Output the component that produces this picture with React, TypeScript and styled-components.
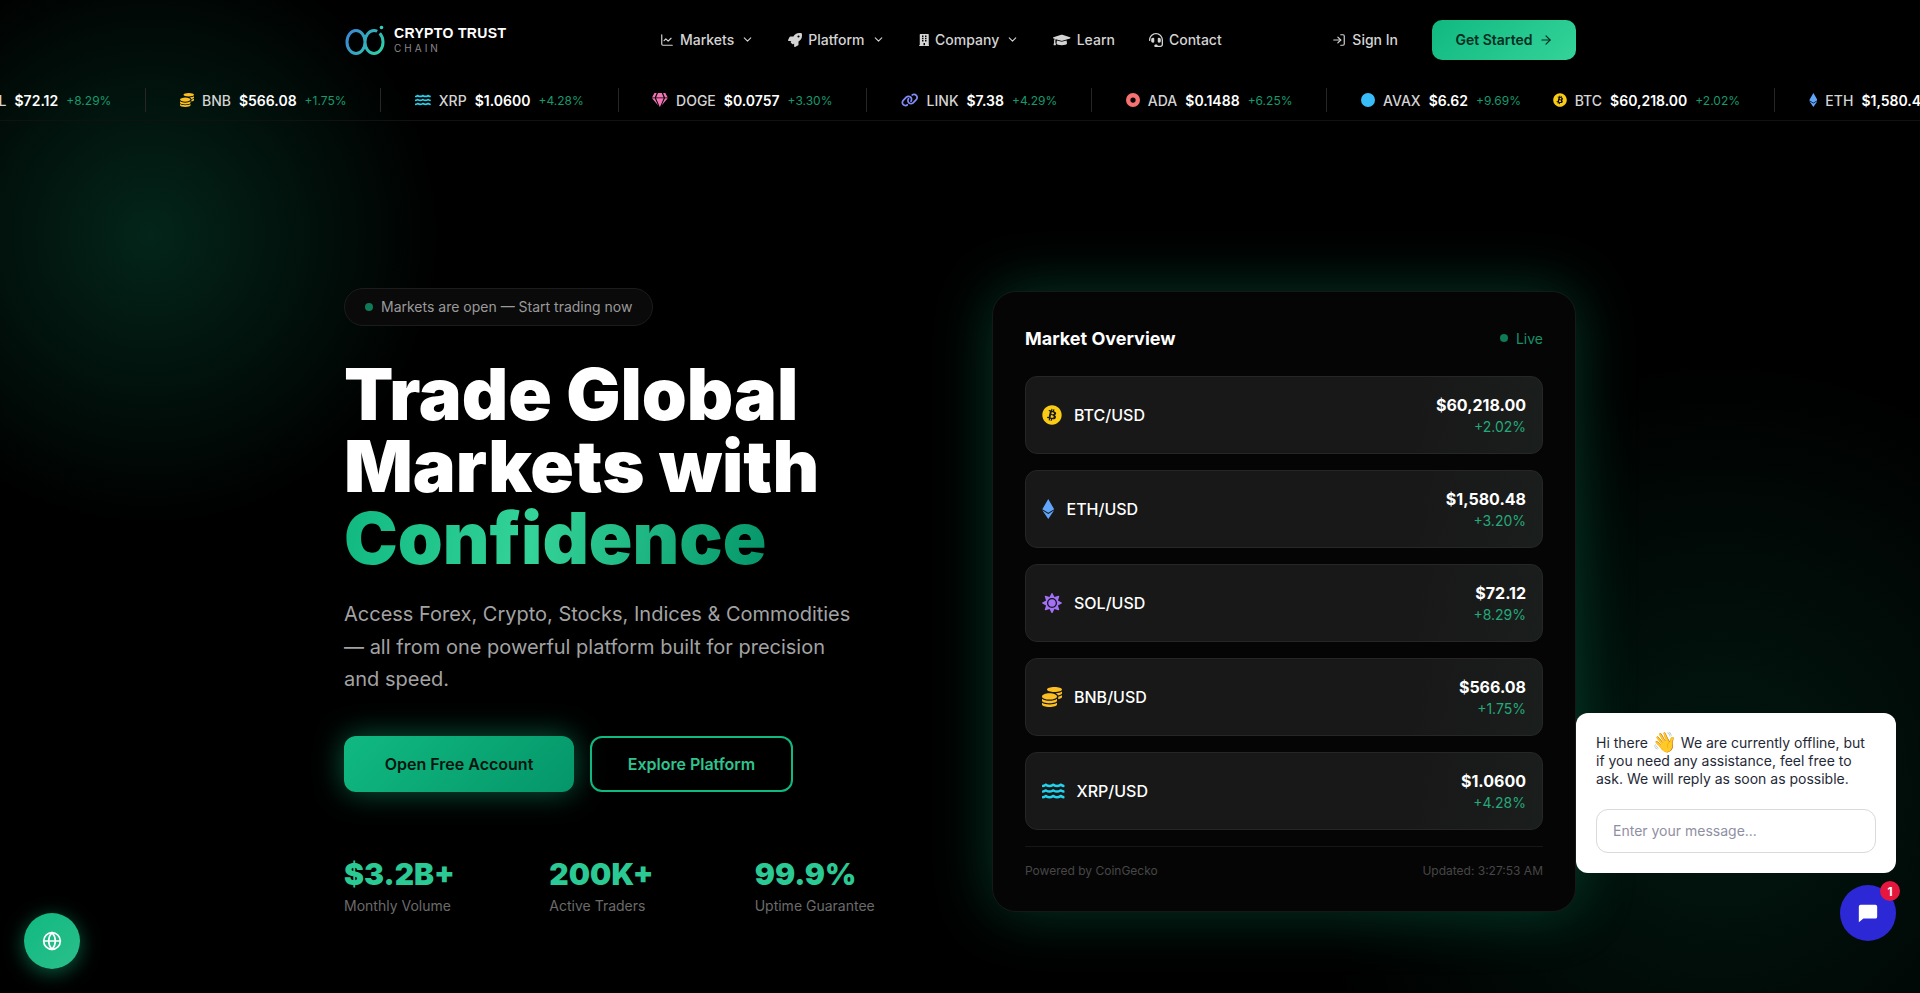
import React from 'react'
import styled, { createGlobalStyle } from 'styled-components'
import { ArrowRight, ChevronDown, Globe, LogIn, LineChart } from 'lucide-react'
import { FaBuilding, FaCoins, FaEthereum, FaGem, FaGraduationCap, FaHeadset, FaRocket, FaSun, FaWater } from 'react-icons/fa'
import { FaBitcoin, FaCircle, FaCircleDot, FaLink } from 'react-icons/fa6'

const GlobalStyle = createGlobalStyle`
  * { box-sizing: border-box; }
  html, body { margin: 0; padding: 0; background: #000; }
  body { font-family: Inter, "Noto Sans", sans-serif; color: #fff; overflow: hidden; }
`

const Page = styled.div`
  position: relative;
  height: 993px;
  overflow: hidden;
  background:
    radial-gradient(circle 290px at 150px 235px, rgba(16, 185, 129, 0.2), rgba(16, 185, 129, 0) 100%),
    radial-gradient(circle 430px at 1720px 790px, rgba(16, 185, 129, 0.13), rgba(16, 185, 129, 0) 100%),
    #000;
`
const NavBar = styled.header`
  height: 80px;
  width: 1232px;
  margin: 0 auto;
  display: flex;
  align-items: center;
  justify-content: space-between;
`
const Logo = styled.div`
  display: flex;
  align-items: center;
  gap: 9px;
`
const LogoText = styled.div`
  display: flex;
  flex-direction: column;
  gap: 2px;
`
const LogoName = styled.span`
  font-family: "Liberation Sans", Arial, sans-serif;
  font-size: 14px;
  line-height: 15px;
  font-weight: 700;
  letter-spacing: 0.35px;
`
const LogoSub = styled.span`
  font-size: 10px;
  line-height: 11px;
  letter-spacing: 3px;
  color: #888;
`
const NavLinks = styled.nav`
  display: flex;
  align-items: center;
  gap: 34px;
  margin-left: 43px;
`
const NavLink = styled.a`
  display: flex;
  align-items: center;
  gap: 6px;
  padding-bottom: 1px;
  font-size: 14px;
  font-weight: 500;
  color: #d4d4d4;
  svg { flex-shrink: 0; }
`
const Caret = styled(ChevronDown)`
  margin-left: 1px;
`
const NavActions = styled.div`
  display: flex;
  align-items: center;
  gap: 34px;
`
const GetStarted = styled.a`
  display: flex;
  align-items: center;
  justify-content: center;
  gap: 6px;
  width: 144px;
  height: 40px;
  padding-bottom: 1px;
  border-radius: 10px;
  background: linear-gradient(135deg, #10b981, #34d399);
  color: #052e1f;
  font-size: 14px;
  font-weight: 600;
`
const Ticker = styled.div`
  height: 41px;
  overflow: hidden;
  border-bottom: 1px solid #111;
`
const TickerTrack = styled.div`
  display: flex;
  align-items: center;
  height: 40px;
  width: max-content;
  transform: translateX(-77px);
`
const TickerItem = styled.div<{ $last?: boolean }>`
  display: flex;
  align-items: center;
  gap: 8px;
  height: 24px;
  padding: 0 ${(props) => (props.$last ? '0' : '33.8px')} 0 33.8px;
  margin-right: ${(props) => (props.$last ? '-2px' : '0')};
  font-size: 14px;
  white-space: nowrap;
  border-right: ${(props) => (props.$last ? 'none' : '1px solid #262626')};
`
const TickerSymbol = styled.span`
  color: #d4d4d4;
  font-weight: 500;
`
const TickerPrice = styled.span`
  color: #fff;
  font-weight: 600;
`
const TickerChange = styled.span`
  color: #169a6c;
  font-size: 12px;
`
const IconBox = styled.span<{ $width: number; $height: number }>`
  display: flex;
  flex-shrink: 0;
  svg {
    width: ${(props) => props.$width}px;
    height: ${(props) => props.$height}px;
  }
`
const Hero = styled.main`
  width: 1232px;
  margin: 0 auto;
  padding-top: 167px;
  display: grid;
  grid-template-columns: 584px 584px;
  gap: 64px;
  align-items: center;
`
const HeroLeft = styled.div`
  display: flex;
  flex-direction: column;
  align-items: flex-start;
`
const StatusPill = styled.div`
  display: flex;
  align-items: center;
  gap: 8px;
  height: 38px;
  padding: 0 20px 1px;
  border-radius: 999px;
  background: #0a0a0a;
  border: 1px solid #1c1c1c;
  font-size: 14px;
  color: #9a9a9a;
`
const Dot = styled.span`
  width: 8px;
  height: 8px;
  border-radius: 50%;
  background: #0f7a57;
`
const Title = styled.h1`
  margin: 32px 0 0;
  font-size: 72px;
  line-height: 72px;
  font-weight: 900;
  color: #fff;
`
const TitleAccent = styled.span`
  display: inline-block;
  background: linear-gradient(100deg, #10b981 0%, #34d399 45%, #059669 100%);
  -webkit-background-clip: text;
  background-clip: text;
  color: transparent;
`
const Lead = styled.p`
  margin: 24px 0 0;
  width: 520px;
  font-size: 20px;
  line-height: 32.5px;
  color: #a3a3a3;
`
const ButtonRow = styled.div`
  display: flex;
  gap: 16px;
  margin-top: 40px;
`
const PrimaryButton = styled.a`
  display: flex;
  align-items: center;
  justify-content: center;
  width: 230px;
  height: 56px;
  border-radius: 12px;
  background: linear-gradient(135deg, #10b981, #059669);
  box-shadow: 0 0 30px rgba(16, 185, 129, 0.5);
  color: #04140e;
  font-size: 16px;
  font-weight: 600;
`
const SecondaryButton = styled.a`
  display: flex;
  align-items: center;
  justify-content: center;
  width: 203px;
  height: 56px;
  border-radius: 12px;
  border: 2px solid #10b981;
  color: #2ec48f;
  font-size: 16px;
  font-weight: 600;
`
const Stats = styled.div`
  display: grid;
  grid-template-columns: repeat(3, 1fr);
  gap: 32px;
  width: 584px;
  margin-top: 64px;
`
const StatValue = styled.div`
  font-size: 30px;
  line-height: 36px;
  font-weight: 900;
  color: #2bc993;
`
const StatLabel = styled.div`
  font-size: 14px;
  line-height: 20px;
  margin-top: 4px;
  color: #6b6b6b;
`
const Card = styled.section`
  height: 621px;
  padding: 32px;
  border-radius: 24px;
  background: #050505;
  border: 1px solid #141a18;
  box-shadow: 0 0 60px rgba(16, 185, 129, 0.3);
`
const CardHeader = styled.div`
  display: flex;
  align-items: center;
  justify-content: space-between;
  height: 28px;
  margin-bottom: 24px;
`
const CardTitle = styled.h2`
  margin: 0;
  font-size: 18px;
  font-weight: 700;
`
const LiveTag = styled.div`
  display: flex;
  align-items: center;
  gap: 8px;
  font-size: 14px;
  color: #17916a;
`
const Rows = styled.div`
  display: flex;
  flex-direction: column;
  gap: 16px;
`
const Row = styled.div`
  display: flex;
  align-items: center;
  justify-content: space-between;
  height: 78px;
  padding: 0 16px;
  border-radius: 12px;
  background: linear-gradient(100deg, #181818 75%, #1a1e1c 100%);
  border: 1px solid #262626;
`
const RowPair = styled.div`
  display: flex;
  align-items: center;
  gap: 12px;
  font-size: 16px;
  font-weight: 500;
`
const RowValues = styled.div`
  text-align: right;
`
const RowPrice = styled.div`
  font-size: 16px;
  line-height: 24px;
  font-weight: 700;
`
const RowChange = styled.div`
  font-size: 14px;
  line-height: 20px;
  color: #25a97a;
`
const CardFooter = styled.div`
  display: flex;
  justify-content: space-between;
  margin-top: 16px;
  padding-top: 16px;
  border-top: 1px solid #171717;
  font-size: 12px;
  line-height: 16px;
  color: #474747;
`
const GlobeButton = styled.div`
  position: absolute;
  left: 24px;
  bottom: 24px;
  width: 56px;
  height: 56px;
  border-radius: 50%;
  display: flex;
  align-items: center;
  justify-content: center;
  background: linear-gradient(135deg, #10b981, #2bbf8a);
  box-shadow: 0 4px 20px rgba(16, 185, 129, 0.5);
  color: #fff;
`
const ChatBubble = styled.div`
  position: absolute;
  left: 1576px;
  top: 713px;
  width: 320px;
  height: 160px;
  padding: 21px 20px 20px;
  border-radius: 12px;
  background: #fff;
  color: #1f2937;
  font-size: 14px;
  line-height: 18px;
`
const Wave = styled.span`
  font-size: 20px;
  line-height: 16px;
  vertical-align: -1px;
`
const ChatInput = styled.div`
  display: flex;
  align-items: center;
  height: 44px;
  margin-top: 21px;
  padding: 0 16px;
  border-radius: 12px;
  border: 1px solid #d9d9de;
  color: #8f8fa3;
`
const ChatFab = styled.div`
  position: absolute;
  left: 1840px;
  top: 885px;
  width: 56px;
  height: 56px;
  border-radius: 50%;
  display: flex;
  align-items: center;
  justify-content: center;
  background: #2d28d6;
`
const ChatBadge = styled.span`
  position: absolute;
  top: -4px;
  right: -4px;
  width: 20px;
  height: 20px;
  border-radius: 50%;
  display: flex;
  align-items: center;
  justify-content: center;
  background: #e5173f;
  color: #fff;
  font-size: 12px;
  font-weight: 700;
`

// ratio is the icon's own width / height, these glyphs are not all square
const coins: Record<string, { icon: React.ElementType; color: string; ratio: number }> = {
  BTC: { icon: FaBitcoin, color: '#facc15', ratio: 1 },
  ETH: { icon: FaEthereum, color: '#60a5fa', ratio: 0.625 },
  SOL: { icon: FaSun, color: '#a371f7', ratio: 1 },
  BNB: { icon: FaCoins, color: '#fbbf24', ratio: 1 },
  XRP: { icon: FaWater, color: '#22d3ee', ratio: 1.125 },
  DOGE: { icon: FaGem, color: '#f472b6', ratio: 1.125 },
  LINK: { icon: FaLink, color: '#818cf8', ratio: 1.25 },
  ADA: { icon: FaCircleDot, color: '#f87171', ratio: 1 },
  AVAX: { icon: FaCircle, color: '#38bdf8', ratio: 1 },
}

const tickerItems = [
  ['SOL', '$72.12', '+8.29%'],
  ['BNB', '$566.08', '+1.75%'],
  ['XRP', '$1.0600', '+4.28%'],
  ['DOGE', '$0.0757', '+3.30%'],
  ['LINK', '$7.38', '+4.29%'],
  ['ADA', '$0.1488', '+6.25%'],
  ['AVAX', '$6.62', '+9.69%'],
  ['BTC', '$60,218.00', '+2.02%'],
  ['ETH', '$1,580.48', '+3.20%'],
]

const overviewRows = [
  ['BTC', '$60,218.00', '+2.02%'],
  ['ETH', '$1,580.48', '+3.20%'],
  ['SOL', '$72.12', '+8.29%'],
  ['BNB', '$566.08', '+1.75%'],
  ['XRP', '$1.0600', '+4.28%'],
]

const stats = [
  ['$3.2B+', 'Monthly Volume'],
  ['200K+', 'Active Traders'],
  ['99.9%', 'Uptime Guarantee'],
]

const CoinIcon = ({ symbol, size }: { symbol: string; size: number }) => {
  const { icon: Icon, color, ratio } = coins[symbol]
  return (
    <IconBox $width={size * ratio} $height={size}>
      <Icon color={color} />
    </IconBox>
  )
}

const LogoMark = () => (
  <svg width='41' height='32' viewBox='0 0 41 32' fill='none'>
    <defs>
      <linearGradient id='logoGrad' x1='2' y1='6' x2='38' y2='30' gradientUnits='userSpaceOnUse'>
        <stop offset='0' stopColor='#3b82d6' />
        <stop offset='1' stopColor='#2dd4a7' />
      </linearGradient>
    </defs>
    <path
      d='M21 18C21 11.5 17 6.5 12 6.5C7 6.5 3 11.5 3 18C3 24.5 7 29.5 12 29.5C17 29.5 21 24.5 21 18C21 24.5 25 29.5 30 29.5C35 29.5 39 24.5 39 18C39 14 37.8 11.5 35.8 9.2M21 18C21 11.5 25 6.5 30 6.5C31.2 6.5 32.3 6.8 33.2 7.3'
      stroke='url(#logoGrad)'
      strokeWidth='3'
    />
    <circle cx='37.5' cy='3.5' r='1.8' fill='#2dd4bf' />
  </svg>
)

export default function App() {
  return (
    <Page>
      <GlobalStyle />
      <NavBar>
        <Logo>
          <LogoMark />
          <LogoText>
            <LogoName>CRYPTO TRUST</LogoName>
            <LogoSub>CHAIN</LogoSub>
          </LogoText>
        </Logo>
        <NavLinks>
          <NavLink><LineChart size={14} />Markets<Caret size={13} /></NavLink>
          <NavLink><FaRocket size={14} />Platform<Caret size={13} /></NavLink>
          <NavLink><IconBox $width={10.5} $height={14}><FaBuilding /></IconBox>Company<Caret size={13} /></NavLink>
          <NavLink><IconBox $width={17.5} $height={14}><FaGraduationCap /></IconBox>Learn</NavLink>
          <NavLink><FaHeadset size={14} />Contact</NavLink>
        </NavLinks>
        <NavActions>
          <NavLink><LogIn size={14} />Sign In</NavLink>
          <GetStarted>Get Started<ArrowRight size={14} /></GetStarted>
        </NavActions>
      </NavBar>

      <Ticker>
        <TickerTrack>
          {tickerItems.map(([symbol, price, change]) => (
            <TickerItem key={symbol} $last={symbol === 'AVAX'}>
              <CoinIcon symbol={symbol} size={14} />
              <TickerSymbol>{symbol}</TickerSymbol>
              <TickerPrice>{price}</TickerPrice>
              <TickerChange>{change}</TickerChange>
            </TickerItem>
          ))}
        </TickerTrack>
      </Ticker>

      <Hero>
        <HeroLeft>
          <StatusPill><Dot />Markets are open — Start trading now</StatusPill>
          <Title>
            Trade Global<br />
            Markets with<br />
            <TitleAccent>Confidence</TitleAccent>
          </Title>
          <Lead>Access Forex, Crypto, Stocks, Indices &amp; Commodities — all from one powerful platform built for precision and speed.</Lead>
          <ButtonRow>
            <PrimaryButton>Open Free Account</PrimaryButton>
            <SecondaryButton>Explore Platform</SecondaryButton>
          </ButtonRow>
          <Stats>
            {stats.map(([value, label]) => (
              <div key={label}>
                <StatValue>{value}</StatValue>
                <StatLabel>{label}</StatLabel>
              </div>
            ))}
          </Stats>
        </HeroLeft>

        <Card>
          <CardHeader>
            <CardTitle>Market Overview</CardTitle>
            <LiveTag><Dot />Live</LiveTag>
          </CardHeader>
          <Rows>
            {overviewRows.map(([symbol, price, change]) => (
              <Row key={symbol}>
                <RowPair>
                  <CoinIcon symbol={symbol} size={20} />
                  {symbol}/USD
                </RowPair>
                <RowValues>
                  <RowPrice>{price}</RowPrice>
                  <RowChange>{change}</RowChange>
                </RowValues>
              </Row>
            ))}
          </Rows>
          <CardFooter>
            <span>Powered by CoinGecko</span>
            <span>Updated: 3:27:53 AM</span>
          </CardFooter>
        </Card>
      </Hero>

      <GlobeButton><Globe size={20} /></GlobeButton>

      <ChatBubble>
        Hi there <Wave>👋</Wave> We are currently offline, but if you need any assistance, feel free to ask. We will reply as soon as possible.
        <ChatInput>Enter your message...</ChatInput>
      </ChatBubble>
      <ChatFab>
        <svg width='22' height='22' viewBox='0 0 24 24' fill='#fff'>
          <path d='M4 3h16a2 2 0 0 1 2 2v11a2 2 0 0 1-2 2H7l-5 4V5a2 2 0 0 1 2-2z' />
        </svg>
        <ChatBadge>1</ChatBadge>
      </ChatFab>
    </Page>
  )
}
